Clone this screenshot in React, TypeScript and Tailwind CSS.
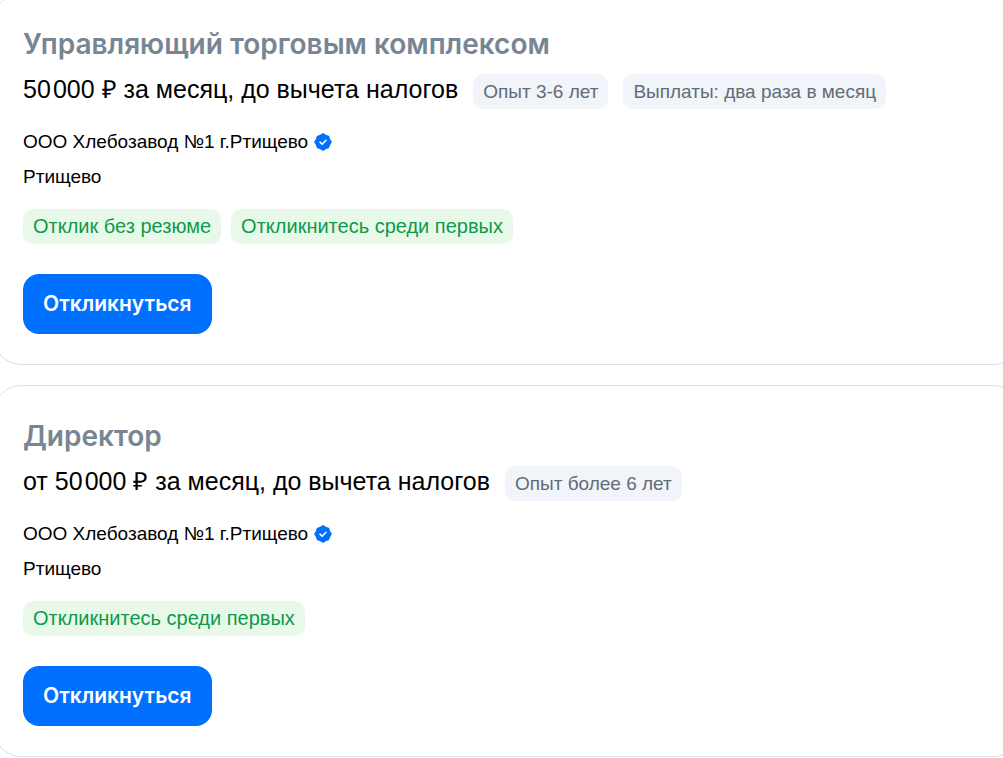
type Vacancy = {
  id: number;
  title: string;
  salary: string;
  terms: string[];
  company: string;
  city: string;
  labels: string[];
};

const vacancies: Vacancy[] = [
  {
    id: 1,
    title: "Управляющий торговым комплексом",
    salary: "50\u200a000 ₽ за месяц, до вычета налогов",
    terms: ["Опыт 3-6 лет", "Выплаты: два раза в месяц"],
    company: "ООО Хлебозавод №1 г.Ртищево",
    city: "Ртищево",
    labels: ["Отклик без резюме", "Откликнитесь среди первых"],
  },
  {
    id: 2,
    title: "Директор",
    salary: "от 50\u200a000 ₽ за месяц, до вычета налогов",
    terms: ["Опыт более 6 лет"],
    company: "ООО Хлебозавод №1 г.Ртищево",
    city: "Ртищево",
    labels: ["Откликнитесь среди первых"],
  },
];

const VerifiedIcon = () => (
  <svg viewBox="0 0 18 18" className="size-[18px]" aria-hidden="true">
    <path
      fill="#0070ff"
      stroke="#0070ff"
      strokeWidth="1.6"
      strokeLinejoin="round"
      d="M9 1 11.4 2.5 14.4 3.6 15.5 6.6 17 9 15.5 11.4 14.4 14.4 11.4 15.5 9 17 6.6 15.5 3.6 14.4 2.5 11.4 1 9 2.5 6.6 3.6 3.6 6.6 2.5Z"
    />
    <path
      fill="none"
      stroke="#fff"
      strokeWidth="1.6"
      strokeLinecap="round"
      strokeLinejoin="round"
      d="M6 9.2 8.1 11.2 12 7.3"
    />
  </svg>
);

const VacancyCard = ({ vacancy }: { vacancy: Vacancy }) => (
  <article className="rounded-[30px] border border-[#dce1e6] p-[30px]">
    <h2 className="font-['Inter',sans-serif] text-[28px] leading-10 font-semibold text-[#788593]">
      <a href={`#vacancy-${vacancy.id}`}>{vacancy.title}</a>
    </h2>
    <div className="mt-[10px] flex flex-wrap items-start gap-[15px]">
      <span className="text-[25px] leading-[30px] text-black">{vacancy.salary}</span>
      {vacancy.terms.map((term) => (
        <span key={term} className="rounded-[10px] bg-[#f1f4f9] px-[10px] text-[19px] leading-[35px] text-[#626c77]">
          {term}
        </span>
      ))}
    </div>
    <div className="mt-[15px] text-[19px] leading-[35px] text-black">
      <div className="flex items-center gap-[6px]">
        <span>{vacancy.company}</span>
        <VerifiedIcon />
      </div>
      <p>{vacancy.city}</p>
    </div>
    <div className="mt-[15px] flex flex-wrap gap-[10px]">
      {vacancy.labels.map((label) => (
        <span key={label} className="rounded-[10px] bg-[#e8f9e9] px-[10px] text-[20px] leading-[35px] text-[#0d9a4b]">
          {label}
        </span>
      ))}
    </div>
    <button
      type="button"
      className="mt-[30px] h-[60px] rounded-[16px] bg-[#0070ff] px-5 font-['Inter',sans-serif] text-[21px] font-semibold text-white"
    >
      Откликнуться
    </button>
  </article>
);

const App = () => {
  return (
    <main className="overflow-hidden bg-white font-['Liberation_Sans',sans-serif]">
      <div className="-mt-[7px] -mr-5 -ml-2 flex flex-col gap-5">
        {vacancies.map((vacancy) => (
          <VacancyCard key={vacancy.id} vacancy={vacancy} />
        ))}
      </div>
    </main>
  );
};

export default App;
